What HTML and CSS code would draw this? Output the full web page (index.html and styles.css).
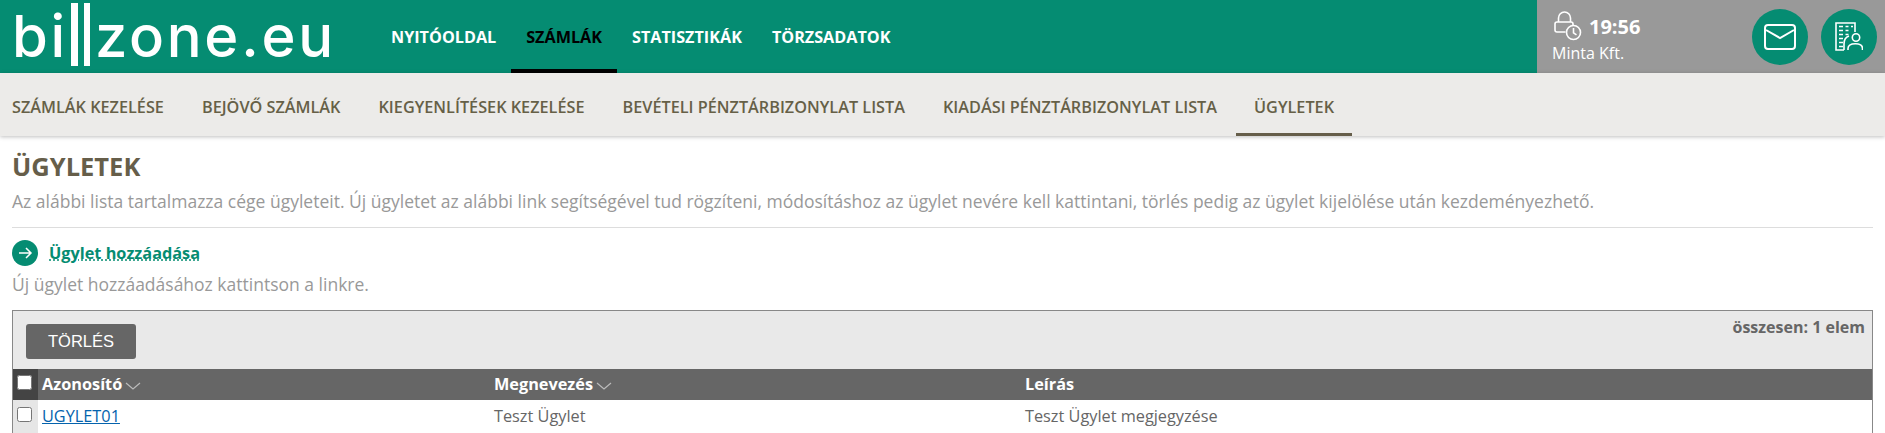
FILE: index.html
```html
<!DOCTYPE html>
<html lang="hu">
<head>
<meta charset="utf-8">
<title>Ügyletek</title>
<link rel="stylesheet" href="styles.css">
</head>
<body>
<header class="topbar">
  <a class="logo"><span>bi</span><i class="bars"></i><span>zone.eu</span></a>
  <nav class="mainnav">
    <a>Nyitóoldal</a>
    <a class="active">Számlák</a>
    <a>Statisztikák</a>
    <a>Törzsadatok</a>
  </nav>
  <div class="userbox">
    <div class="session">
      <div class="timer">
        <svg class="lock" viewBox="0 0 28 30" width="28" height="30" fill="none" stroke="#fff" stroke-width="1.600">
          <path d="M11.500 21H3a2 2 0 0 1-2-2v-6a2 2 0 0 1 2-2h14a2 2 0 0 1 2 2v1"/>
          <path d="M4.500 11V7a6 6 0 0 1 12 0v4"/>
          <circle cx="19.500" cy="21.500" r="7"/>
          <path d="M19.500 17v4.800l3 2"/>
        </svg>
        <strong>19:56</strong>
      </div>
      <div class="company">Minta Kft.</div>
    </div>
    <a class="round">
      <svg viewBox="0 0 32 26" width="32" height="26" fill="none" stroke="#fff" stroke-width="2">
        <rect x="1" y="1" width="30" height="24" rx="3"/>
        <path d="M2 6l14 8 14-8"/>
      </svg>
    </a>
    <a class="round">
      <svg viewBox="0 0 28 29" width="28" height="29" fill="none" stroke="#fff" stroke-width="1.600">
        <path d="M9 28H1V1h19v9"/>
        <path d="M4 4.500h4M10.500 4.500h3M16 4.500h2M4 8.500h4M10.500 8.500h3M4 12.500h4M10.500 12.500h3M4 16.500h4M4 20.500h4M4 24.500h4"/>
        <path d="M9 28v-6c0-4 2-7 5-8"/>
        <circle cx="21" cy="15.500" r="3.700"/>
        <path d="M13 28v-1.500c0-3 3-4.800 7.500-4.800s7 1.800 7 4.800V28"/>
      </svg>
    </a>
  </div>
</header>

<nav class="subnav">
  <a>Számlák kezelése</a>
  <a>Bejövő számlák</a>
  <a>Kiegyenlítések kezelése</a>
  <a>Bevételi pénztárbizonylat lista</a>
  <a>Kiadási pénztárbizonylat lista</a>
  <a class="active">Ügyletek</a>
</nav>

<main class="content">
  <h1>Ügyletek</h1>
  <p class="lead">Az alábbi lista tartalmazza cége ügyleteit. Új ügyletet az alábbi link segítségével tud rögzíteni, módosításhoz az ügylet nevére kell kattintani, törlés pedig az ügylet kijelölése után kezdeményezhető.</p>
  <hr class="rule">
  <div class="addrow">
    <span class="arrow">
      <svg viewBox="0 0 16 16" width="16" height="16" fill="none" stroke="#fff" stroke-width="1.500"><path d="M2 8h12M9 3l5 5-5 5"/></svg>
    </span>
    <a class="addlink">Ügylet hozzáadása</a>
  </div>
  <p class="hint">Új ügylet hozzáadásához kattintson a linkre.</p>

  <section class="grid">
    <div class="toolbar">
      <button class="btn" type="button">TÖRLÉS</button>
      <span class="count">összesen: 1 elem</span>
    </div>
    <div class="row head">
      <div class="check"><input type="checkbox"></div>
      <div class="c1">Azonosító<svg class="chev" viewBox="0 0 16 8" width="16" height="8" fill="none" stroke="#bbb" stroke-width="1.200"><path d="M1 1l7 6 7-6"/></svg></div>
      <div class="c2">Megnevezés<svg class="chev" viewBox="0 0 16 8" width="16" height="8" fill="none" stroke="#bbb" stroke-width="1.200"><path d="M1 1l7 6 7-6"/></svg></div>
      <div class="c3">Leírás</div>
    </div>
    <div class="row body">
      <div class="check"><input type="checkbox"></div>
      <div class="c1"><a class="idlink">UGYLET01</a></div>
      <div class="c2">Teszt Ügylet</div>
      <div class="c3">Teszt Ügylet megjegyzése</div>
    </div>
  </section>
</main>
</body>
</html>
```
FILE: styles.css
```css
* { box-sizing: border-box; }
html, body { margin: 0; height: 433px; overflow: hidden; }
body { background: #fff; font-family: "Open Sans", sans-serif; color: #666; }

.topbar { display: flex; align-items: stretch; height: 73px; background: #058c72; }
.logo { display: flex; align-items: flex-start; flex: none; width: 376px; padding-left: 12px; color: #fff; font-family: "Inter", sans-serif; font-size: 58px; font-weight: 500; line-height: 73px; letter-spacing: 2.700px; }
.bars { display: block; flex: none; width: 19px; height: 63px; margin: 3px 5px 0 3px; border-left: 7px solid #fff; border-right: 6px solid #fff; }

.mainnav { display: flex; flex: 1; }
.mainnav a { display: flex; align-items: center; padding: 0 15px; height: 73px; color: #fff; font-size: 16.200px; font-weight: 700; text-transform: uppercase; }
.mainnav a.active { color: #000; border-bottom: 4px solid #000; padding-top: 4px; }

.userbox { display: flex; align-items: center; flex: none; width: 348px; height: 73px; padding: 0 8px 0 15px; background: #999; color: #fff; }
.session { flex: none; width: 200px; }
.timer { display: flex; align-items: center; gap: 7px; height: 30px; margin-top: 1px; }
.timer strong { font-size: 20px; padding-top: 2px; }
.lock { flex: none; margin-left: 2px; }
.company { font-size: 16px; line-height: 22px; margin-top: 1px; }
.round { display: flex; align-items: center; justify-content: center; flex: none; width: 56px; height: 56px; border-radius: 50%; background: #058c72; margin-right: 13px; }
.round:last-child { margin-right: 0; }

.subnav { display: flex; height: 63px; background: #ecebe9; box-shadow: 0 1px 4px rgba(0,0,0,.25); position: relative; }
.subnav a { display: flex; align-items: center; padding: 4px 19px 0; color: #666047; font-size: 16.250px; font-weight: 600; text-transform: uppercase; }
.subnav a:first-child { padding-left: 12px; }
.subnav a.active { border-bottom: 3px solid #665e4a; padding: 7px 18px 0; }

.content { padding: 14px 12px 0; }
h1 { margin: 0; font-size: 25.500px; line-height: 32px; font-weight: 700; color: #665e4a; text-transform: uppercase; }
.lead, .hint { font-size: 17.500px; line-height: 26px; color: #999; }
.lead { margin: 6px 0 0; }
.rule { margin: 13px 0 0; border: 0; border-top: 1px solid #ddd; }
.addrow { display: flex; align-items: center; gap: 11px; height: 26px; margin-top: 12px; }
.arrow { display: flex; align-items: center; justify-content: center; width: 26px; height: 26px; border-radius: 50%; background: #058c72; }
.addlink { color: #058c72; font-size: 16.300px; font-weight: 700; text-decoration: underline dotted; }
.hint { margin: 5px 0 0; }

.grid { margin-top: 13px; border: 1px solid #888; height: 200px; }
.toolbar { display: flex; justify-content: space-between; align-items: flex-start; height: 58px; padding: 13px 7px 0 13px; background: #e9e9e9; }
.btn { width: 110px; height: 35px; border: 0; border-radius: 3px; background: #666; color: #fff; font-family: "Liberation Sans", sans-serif; font-size: 16.500px; }
.count { margin-top: -8px; font-size: 16px; font-weight: 700; color: #666; }
.row { display: grid; grid-template-columns: 25px 456px 531px 1fr; font-size: 16.300px; }
.row.head { height: 31px; background: #666; color: #fff; font-weight: 700; align-items: center; }
.row.head > div:not(.check) { padding-bottom: 2px; }
.row.body { height: 33px; color: #666; }
.row .check { display: flex; height: 100%; padding-left: 4px; }
.row.head .check { background: #444; padding-top: 6px; }
.row.body .check { background: #e6e6e6; padding-top: 7px; height: 60px; }
.check input { margin: 0; width: 15px; height: 15px; }
.row.body .c1, .row.body .c2, .row.body .c3 { line-height: 32px; }
.row .c1 { padding-left: 4px; }
.chev { margin-left: 3px; }
.idlink { color: #0563ad; text-decoration: underline; }
```
